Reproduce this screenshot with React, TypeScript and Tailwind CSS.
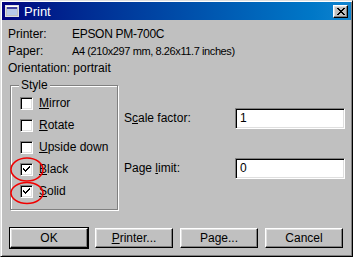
import React from 'react';

const font = { fontFamily: '"Liberation Sans", Arial, sans-serif' };

const raised =
  'border border-t-white border-l-white border-r-black border-b-black shadow-[inset_-1px_-1px_#808080,inset_1px_1px_#dfdfdf]';

const CheckRow = ({ u, rest, checked }: { u: string; rest: string; checked?: boolean }) => (
  <div className="flex h-[22px] items-center gap-[6px]">
    <div className="flex h-[13px] w-[13px] items-center justify-center border border-t-[#808080] border-l-[#808080] border-r-white border-b-white bg-white shadow-[inset_1px_1px_#000,inset_-1px_-1px_#dfdfdf]">
      {checked && (
        <svg width="9" height="9" viewBox="0 0 9 9">
          <path d="M1 3h1v1h1v1h1V4h1V3h1V2h1V1h1v2H7v1H6v1H5v1H4v1H3V6H2V5H1z" fill="#000" />
        </svg>
      )}
    </div>
    <span>
      <u className="underline-offset-[1px]">{u}</u>
      {rest}
    </span>
  </div>
);

const Button = ({ children, isDefault }: { children: React.ReactNode; isDefault?: boolean }) => {
  const btn = (
    <div className={`flex h-[20px] w-[78px] items-center justify-center bg-[#c0c0c0] ${raised}`}>{children}</div>
  );
  if (isDefault) return <div className="border border-black">{btn}</div>;
  return btn;
};

const Field = ({ u, before, rest, value }: { u: string; before: string; rest: string; value: string }) => (
  <div className="flex items-center">
    <span className="w-[111px]">
      {before}
      <u className="underline-offset-[1px]">{u}</u>
      {rest}
    </span>
    <div className="flex h-[21px] w-[110px] items-center border border-t-[#808080] border-l-[#808080] border-r-white border-b-white bg-white pl-[4px] shadow-[inset_1px_1px_#000,inset_-1px_-1px_#dfdfdf]">
      {value}
    </div>
  </div>
);

export default function App() {
  return (
    <div
      className="relative flex h-[257px] w-[353px] flex-col border border-t-[#dfdfdf] border-l-[#dfdfdf] border-r-black border-b-black bg-[#c0c0c0] p-px text-[12px] leading-[17px] text-black shadow-[inset_1px_1px_#fff,inset_-1px_-1px_#808080]"
      style={font}
    >
      <div className="flex h-[18px] items-center bg-gradient-to-r from-[#000080] to-[#1084d0] pl-[3px] pr-[3px]">
        <svg width="14" height="12" viewBox="0 0 14 12" className="mr-[5px]">
          <rect x="0.5" y="0.5" width="13" height="11" fill="#c0c0c0" stroke="#dfdfdf" />
          <rect x="2" y="2" width="10" height="2" fill="#4040a0" />
          <rect x="2" y="4" width="10" height="6" fill="#b8c8e8" />
          <rect x="1" y="1" width="12" height="1" fill="#fff" />
        </svg>
        <span className="text-[13px] text-white">Print</span>
        <div className={`ml-auto flex h-[13px] w-[15px] items-center justify-center bg-[#c0c0c0] ${raised}`}>
          <svg width="8" height="7" viewBox="0 0 8 7">
            <path d="M0 0h2v1h1v1h2V1h1V0h2v1H7v1H6v1H5v1h1v1h1v1h1v1H6V6H5V5H3v1H2v1H0V6h1V5h1V4h1V3H2V2H1V1H0z" fill="#000" />
          </svg>
        </div>
      </div>

      <div className="mt-[6px] pl-[6px]">
        <div className="flex">
          <span className="w-[64px]">Printer:</span>
          <span className="tracking-[-0.3px]">EPSON PM-700C</span>
        </div>
        <div className="flex">
          <span className="w-[64px]">Paper:</span>
          <span className="text-[11px] tracking-[-0.4px]">A4 (210x297 mm, 8.26x11.7 inches)</span>
        </div>
        <div>Orientation: portrait</div>
      </div>

      <div className="mt-[8px] flex">
        <div className="relative ml-[8px] h-[125px] w-[108px] border border-[#808080] pb-[7px] pl-[9px] pt-[6px] shadow-[inset_1px_1px_#fff,1px_1px_#fff]">
          <span className="absolute left-[8px] top-[-9px] bg-[#c0c0c0] px-[2px]">Style</span>
          <CheckRow u="M" rest="irror" />
          <CheckRow u="R" rest="otate" />
          <CheckRow u="U" rest="pside down" />
          <CheckRow u="B" rest="lack" checked />
          <CheckRow u="S" rest="olid" checked />
        </div>
        <div className="flex flex-col gap-[29px] pl-[6px] pt-[23px]">
          <Field before="S" u="c" rest="ale factor:" value="1" />
          <Field before="Page " u="l" rest="imit:" value="0" />
        </div>
      </div>

      <div className="mt-[17px] flex items-start pl-[7px]">
        <Button isDefault>OK</Button>
        <div className="ml-[6px] mt-px">
          <Button>
            <u className="underline-offset-[1px]">P</u>rinter...
          </Button>
        </div>
        <div className="ml-[7px] mt-px">
          <Button>
            Pa<u className="underline-offset-[1px]">g</u>e...
          </Button>
        </div>
        <div className="ml-[7px] mt-px">
          <Button>Cancel</Button>
        </div>
      </div>

      <svg className="pointer-events-none absolute left-0 top-0" width="60" height="210" viewBox="0 0 60 210">
        <ellipse cx="26" cy="168.5" rx="16" ry="11.5" fill="none" stroke="#f00000" strokeWidth="1.6" />
        <ellipse cx="26" cy="192" rx="16" ry="10.5" fill="none" stroke="#f00000" strokeWidth="1.6" />
      </svg>
    </div>
  );
}
